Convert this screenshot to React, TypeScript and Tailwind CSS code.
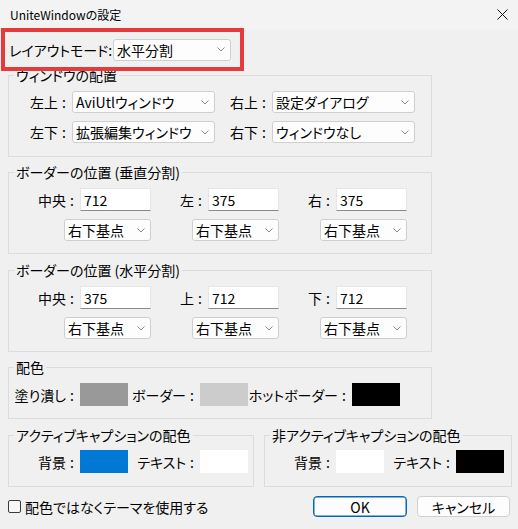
import React from "react";

function Chevron() {
  return (
    <svg width="8" height="5" viewBox="0 0 8 5" className="shrink-0">
      <path d="M0.5 0.5 L4 4 L7.5 0.5" fill="none" stroke="#8a8a8a" strokeWidth="1" />
    </svg>
  );
}

function Select({ value, w }: { value: string; w: string }) {
  return (
    <div
      className={`flex h-[22px] shrink-0 items-center justify-between rounded-[3px] border border-[#cfcfcf] bg-[#fdfdfd] pl-[3px] pr-[5px] text-[14px] leading-none ${w}`}
    >
      <span className="whitespace-nowrap">{value}</span>
      <Chevron />
    </div>
  );
}

function Input({ value }: { value: string }) {
  return (
    <div className="flex h-[23px] w-[71px] shrink-0 items-center border border-[#e6e6e6] border-b-[#8b8b8b] bg-white pl-[3px] text-[14px] leading-none">
      {value}
    </div>
  );
}

function Label({ text, w }: { text: string; w: string }) {
  return (
    <div className={`flex shrink-0 items-center justify-end whitespace-nowrap text-[14px] leading-none ${w}`}>
      <span>{text}</span>
      <span className="inline-block w-[12px] text-center">:</span>
      <span className="inline-block w-[2px]" />
    </div>
  );
}

function Swatch({ color }: { color: string }) {
  return <div className={`h-[23px] w-[48px] shrink-0 ${color}`} />;
}

function Group({
  title,
  className,
  children,
}: {
  title: string;
  className: string;
  children: React.ReactNode;
}) {
  return (
    <div className={`relative shrink-0 border border-[#dcdcdc] ${className}`}>
      <span className="absolute left-[5px] top-[-11px] whitespace-nowrap bg-[#f0f0f0] px-[2px] text-[14px] leading-[20px]">
        {title}
      </span>
      {children}
    </div>
  );
}

function BorderGroup({
  title,
  labels,
  values,
  className,
}: {
  title: string;
  labels: string[];
  values: string[];
  className: string;
}) {
  const widths = ["w-[142px]", "w-[128px]", "w-[128px]"];
  const labelWidths = ["w-[71px]", "w-[57px]", "w-[57px]"];
  return (
    <Group title={title} className={`h-[82px] w-[424px] ml-[8px] ${className}`}>
      <div className="flex pt-[15px]">
        {labels.map((l, i) => (
          <div key={i} className={`flex flex-col items-end gap-[8px] ${widths[i]}`}>
            <div className="flex items-center">
              <Label text={l} w={labelWidths[i]} />
              <Input value={values[i]} />
            </div>
            <Select value="右下基点" w="w-[87px]" />
          </div>
        ))}
      </div>
    </Group>
  );
}

export default function App() {
  return (
    <div className="h-[529px] w-[518px] overflow-hidden bg-[#f0f0f0] font-['Noto_Sans_CJK_JP','Noto_Sans',sans-serif] text-black [font-feature-settings:'palt']">
      {/* title bar */}
      <div className="flex h-[30px] items-center justify-between bg-[#f3f3f3] pl-[10px] pr-[10px]">
        <span className="text-[12px] leading-none">UniteWindowの設定</span>
        <svg width="11" height="11" viewBox="0 0 11 11" className="-mt-[2px]">
          <path d="M0.5 0.5 L10.5 10.5 M10.5 0.5 L0.5 10.5" stroke="#111" strokeWidth="1" fill="none" />
        </svg>
      </div>

      {/* layout mode (highlighted) */}
      <div className="relative z-10 -mt-[2px] ml-[1px] flex h-[43px] w-[243px] items-center border-4 border-[#e43c3c] pl-[4px]">
        <Label text="レイアウトモード" w="w-[104px]" />
        <Select value="水平分割" w="w-[118px]" />
      </div>

      {/* window arrangement */}
      <Group title="ウィンドウの配置" className="mt-[4px] ml-[8px] h-[82px] w-[424px]">
        <div className="flex flex-col gap-[8px] pt-[15px]">
          <div className="flex items-center">
            <Label text="左上" w="w-[63px]" />
            <Select value="AviUtlウィンドウ" w="w-[143px]" />
            <Label text="右上" w="w-[57px]" />
            <Select value="設定ダイアログ" w="w-[143px]" />
          </div>
          <div className="flex items-center">
            <Label text="左下" w="w-[63px]" />
            <Select value="拡張編集ウィンドウ" w="w-[143px]" />
            <Label text="右下" w="w-[57px]" />
            <Select value="ウィンドウなし" w="w-[143px]" />
          </div>
        </div>
      </Group>

      <BorderGroup
        title="ボーダーの位置 (垂直分割)"
        labels={["中央", "左", "右"]}
        values={["712", "375", "375"]}
        className="mt-[15px]"
      />
      <BorderGroup
        title="ボーダーの位置 (水平分割)"
        labels={["中央", "上", "下"]}
        values={["375", "712", "712"]}
        className="mt-[16px]"
      />

      {/* colors */}
      <Group title="配色" className="mt-[15px] ml-[8px] h-[52px] w-[424px]">
        <div className="flex items-center pt-[15px]">
          <Label text="塗り潰し" w="w-[71px]" />
          <Swatch color="bg-[#999999]" />
          <Label text="ボーダー" w="w-[72px]" />
          <Swatch color="bg-[#cccccc]" />
          <Label text="ホットボーダー" w="w-[104px]" />
          <Swatch color="bg-black" />
        </div>
      </Group>

      <div className="mt-[16px] ml-[8px] flex gap-[10px]">
        <Group title="アクティブキャプションの配色" className="h-[52px] w-[246px]">
          <div className="flex items-center pt-[14px]">
            <Label text="背景" w="w-[71px]" />
            <Swatch color="bg-[#0078d4]" />
            <Label text="テキスト" w="w-[72px]" />
            <Swatch color="bg-white" />
          </div>
        </Group>
        <Group title="非アクティブキャプションの配色" className="h-[52px] w-[248px]">
          <div className="flex items-center pt-[14px]">
            <Label text="背景" w="w-[71px]" />
            <Swatch color="bg-white" />
            <Label text="テキスト" w="w-[72px]" />
            <Swatch color="bg-black" />
          </div>
        </Group>
      </div>

      {/* bottom row */}
      <div className="mt-[9px] flex h-[21px] items-center pl-[8px] pr-[8px]">
        <div className="h-[13px] w-[13px] rounded-[2px] border border-[#3a3a3a] bg-[#f7f7f7]" />
        <span className="ml-[4px] text-[14px] leading-none">配色ではなくテーマを使用する</span>
        <div className="ml-auto flex gap-[10px]">
          <div className="flex h-[21px] w-[94px] items-center justify-center rounded-[4px] border border-[#0067c0] bg-[#fdfdfd] text-[14px] leading-none shadow-[inset_0_0_0_0.5px_#0067c0]">
            OK
          </div>
          <div className="flex h-[21px] w-[93px] items-center justify-center rounded-[4px] border border-[#d0d0d0] bg-[#fdfdfd] text-[14px] leading-none">
            キャンセル
          </div>
        </div>
      </div>
    </div>
  );
}
